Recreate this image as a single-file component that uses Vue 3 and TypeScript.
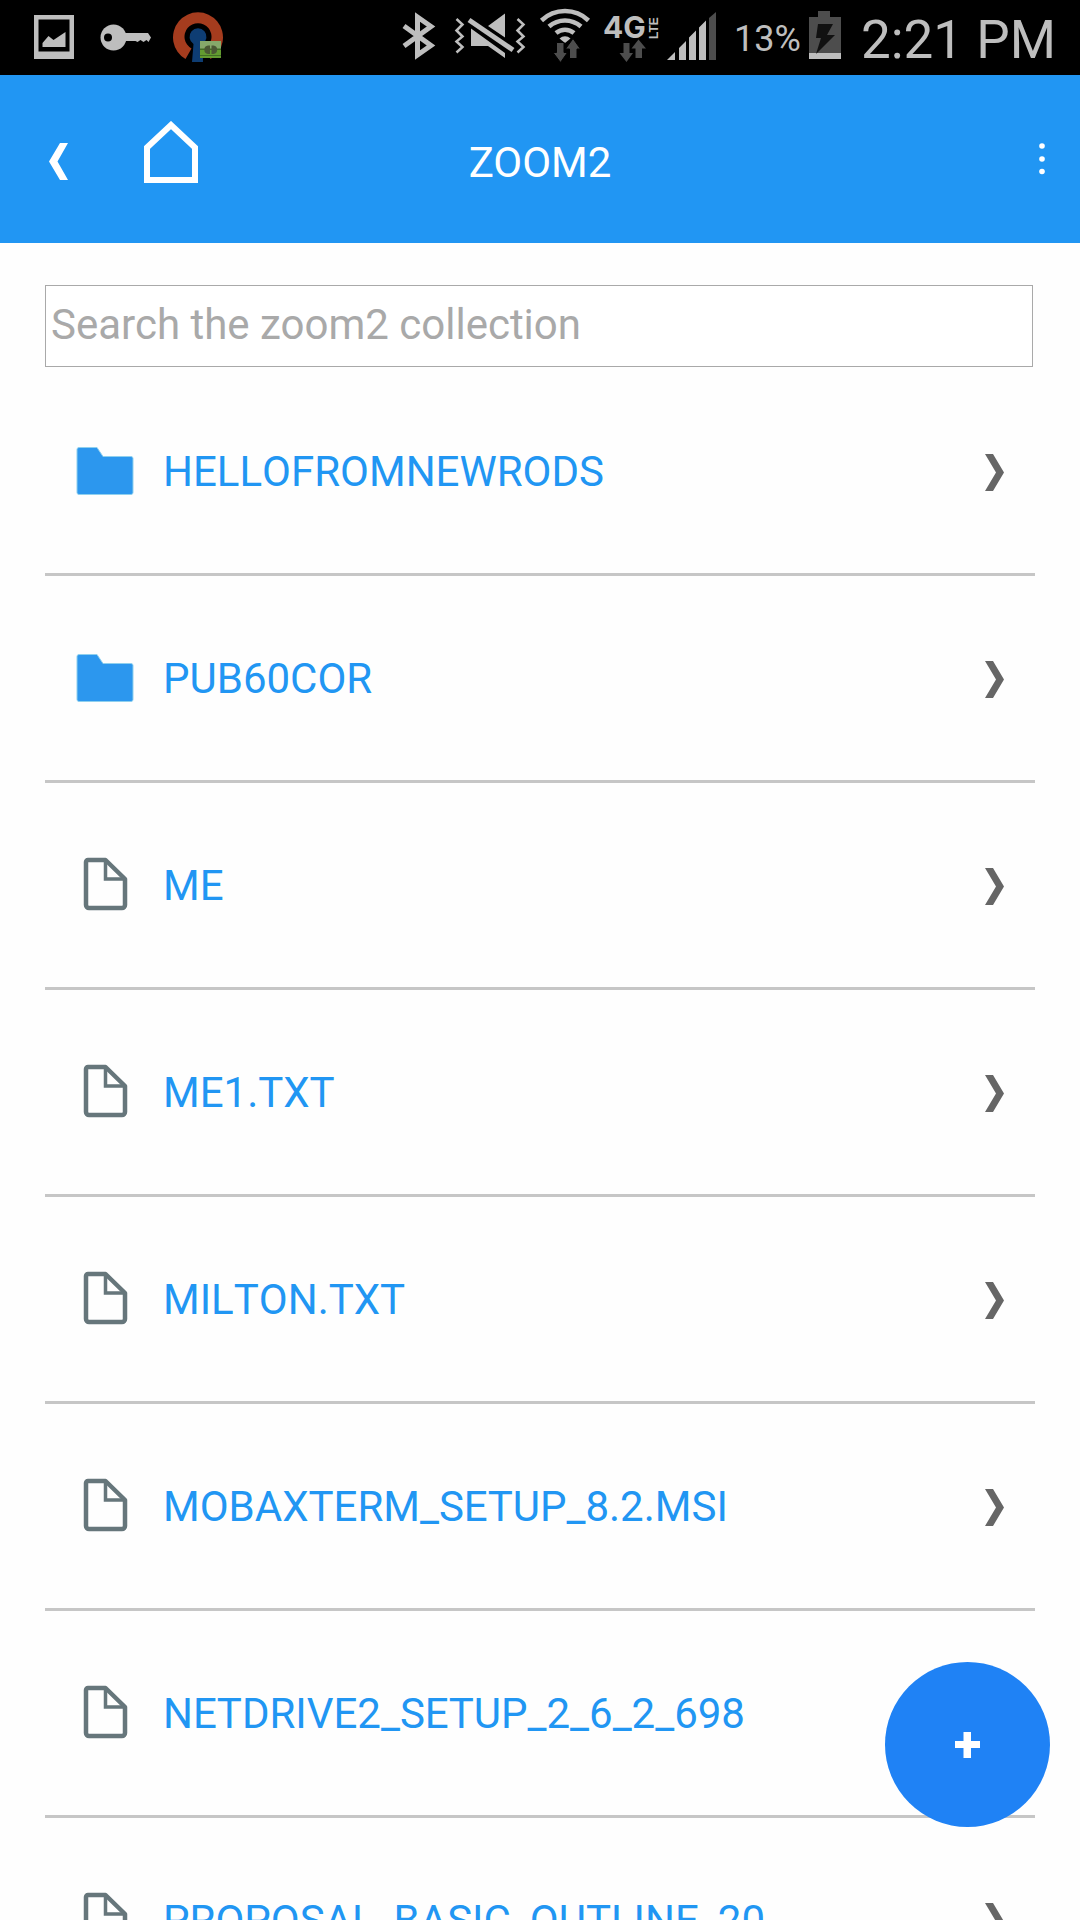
<script setup lang="ts">
import { ref } from 'vue'

interface Entry {
  name: string
  kind: 'folder' | 'file'
}

const query = ref('')

const entries: Entry[] = [
  { name: 'HELLOFROMNEWRODS', kind: 'folder' },
  { name: 'PUB60COR', kind: 'folder' },
  { name: 'ME', kind: 'file' },
  { name: 'ME1.TXT', kind: 'file' },
  { name: 'MILTON.TXT', kind: 'file' },
  { name: 'MOBAXTERM_SETUP_8.2.MSI', kind: 'file' },
  { name: 'NETDRIVE2_SETUP_2_6_2_698', kind: 'file' },
  { name: 'PROPOSAL_BASIC_OUTLINE_20', kind: 'file' },
]
</script>

<template>
  <div class="app">
    <div class="status">
      <div class="notices">
        <svg width="45" height="75" viewBox="33 0 45 75" aria-hidden="true">
          <path fill="#bebebe" fill-rule="evenodd" d="M34 15h40v44H34zM38.500 19.500v32h31v-32z" />
          <path fill="#bebebe" d="M42.500 47v-4l6-7 5 4 12-8v15z" />
        </svg>
        <svg width="54" height="75" viewBox="98 0 54 75" aria-hidden="true">
          <path fill="#bebebe" d="M124.500 33H148l3 4.500-2.500 4.500-2-2-3 2-3-2-3 2-2-1H124.500z" />
          <circle cx="113.500" cy="37.500" r="13" fill="#bebebe" />
          <circle cx="108" cy="37.500" r="4" fill="#000" />
        </svg>
        <svg width="52" height="75" viewBox="172 0 52 75" aria-hidden="true">
          <path fill="#a53c1e" d="M185.500 59A25 25 0 1 1 210.500 59L204.500 48.500A13.500 13.500 0 1 0 191.500 48.500z" />
          <path fill="#0e3d73" d="M193.500 44a8.500 8.500 0 1 1 9 0L203 62H192z" />
          <path fill="#86a96a" d="M200 41h21v8h-21z" />
          <path fill="#639b30" d="M200 49h21v9h-21z" />
          <path fill="#426d25" d="M200 48.500h21v1.500h-21zM200 55h21v1h-21z" />
          <path fill="#4b5934" d="M210 45.500v8.500h-2a4.300 4.300 0 0 1 0-8.500zM211.500 45.500v8.500h2a4.300 4.300 0 0 0 0-8.500z" />
        </svg>
      </div>
      <div class="system">
        <svg width="40" height="75" viewBox="400 0 40 75" aria-hidden="true">
          <path fill="none" stroke="#bebebe" stroke-width="5" d="M404 26l27 19.500-13.500 9.500V17L431 26.500 404 46" />
        </svg>
        <svg width="80" height="75" viewBox="448 0 80 75" aria-hidden="true">
          <path fill="none" stroke="#bebebe" stroke-width="2.500" d="M456.500 19l6 5.500-6 6 6 6-6 5 6 5.500-6 5.500M517.500 19l6 5.500-6 6 6 6-6 5 6 5.500-6 5.500" />
          <path fill="#bebebe" d="M505 13.500v24L488 26zM471 28.500L505 53v5l-17-12h-17z" />
          <path stroke="#bebebe" stroke-width="5" d="M469 20l44 30" />
        </svg>
        <svg width="56" height="75" viewBox="536 0 56 75" aria-hidden="true">
          <g fill="none" stroke="#bebebe" stroke-width="4.500">
            <path d="M541.500 20.500a34 34 0 0 1 47 0" />
            <path d="M549 26.500a24 24 0 0 1 32 0" />
            <path d="M556 33a14 14 0 0 1 18 0" />
          </g>
          <path fill="#bebebe" d="M559.500 38.500a8 8 0 0 1 11 0L565 43z" />
          <path fill="#4d4d4d" stroke="#000" stroke-width="1" d="M556.500 42.500h7.500v10h3.500L560.500 62.500 553 52.500h3.500zM569.500 58.500h7.500v-9.500h3.500L573 38.500 565.500 49h4z" />
        </svg>
        <svg width="62" height="75" viewBox="600 0 62 75" role="img" aria-label="4G LTE">
          <text x="603" y="38" class="net">4G</text>
          <text x="-39" y="658" transform="rotate(-90)" class="lte">LTE</text>
          <path fill="#4d4d4d" d="M623.500 43h6v10h3.500L626.500 62 619.500 53h4zM635.500 58h6.500v-9.500h4L638.500 39.500 631.500 48.500h4z" />
        </svg>
        <svg width="48" height="75" viewBox="666 0 48 75" class="signal" aria-hidden="true">
          <path fill="#bebebe" d="M667 60l8-8v8zM679 60V48l7-7v19zM689 60V37.500l7-7V60zM699 60V27.500l7-7V60z" />
          <path fill="#4d4d4d" d="M709 60V18l7-6v48z" />
        </svg>
        <span class="percent">13%</span>
        <svg width="44" height="75" viewBox="809 0 44 75" aria-hidden="true">
          <path fill="#4d4d4d" d="M809 17h9v-6h12v6h11v36h-32z" />
          <path fill="#bebebe" d="M809 53h32v6h-32z" />
          <path fill="#111" d="M818 24h15l-6 11h8L816 54l5-16h-5z" />
        </svg>
        <time class="clock">2:21 PM</time>
      </div>
    </div>

    <header class="bar">
      <div class="side">
        <button type="button" class="icon back" aria-label="Back">
          <svg width="19" height="37" viewBox="0 0 19 37"><path fill="#fff" d="M11 0h8L8.500 18.500 19 37h-8L0 18.500z" /></svg>
        </button>
        <button type="button" class="icon home" aria-label="Home">
          <svg width="54" height="62" viewBox="0 0 54 62"><path fill="none" stroke="#fff" stroke-width="6" d="M3 26.500L27 4 51 26.500V59H3z" /></svg>
        </button>
      </div>
      <h1>ZOOM2</h1>
      <div class="side end">
        <button type="button" class="icon" aria-label="More options">
          <svg width="8" height="32" viewBox="0 0 8 32" fill="#fff"><circle cx="4" cy="3" r="2.800" /><circle cx="4" cy="16" r="2.800" /><circle cx="4" cy="28.500" r="2.800" /></svg>
        </button>
      </div>
    </header>

    <main>
      <input v-model="query" type="search" class="search" aria-label="Search the zoom2 collection" placeholder="Search the zoom2 collection" />
      <ul>
        <li v-for="entry in entries" :key="entry.name">
          <a href="#">
            <svg v-if="entry.kind === 'folder'" width="60" height="60" viewBox="0 0 60 60" aria-hidden="true">
              <path fill="#2c97ee" stroke="#8fd0ee" stroke-width="1" d="M4 6.500h18l6 9h28a2 2 0 0 1 2 2v34a2 2 0 0 1-2 2H4a2 2 0 0 1-2-2v-43a2 2 0 0 1 2-2z" />
            </svg>
            <svg v-else width="60" height="60" viewBox="0 0 60 60" fill="none" stroke="#66767b" aria-hidden="true">
              <path stroke-width="4.500" stroke-linejoin="round" d="M13 5h17.500L50 24v26a3 3 0 0 1-3 3H14a3 3 0 0 1-3-3V7a2 2 0 0 1 2-2z" />
              <path stroke-width="3.500" d="M30.500 5.500V24H50" />
            </svg>
            <span class="name">{{ entry.name }}</span>
            <svg width="19" height="40" viewBox="0 -3 19 40" aria-hidden="true"><path fill="#666" d="M0 0h8l11 18.500L8 37H0l11-18.500z" /></svg>
          </a>
        </li>
      </ul>
    </main>

    <button type="button" class="fab" aria-label="Add">
      <svg width="26" height="26" viewBox="0 0 26 26"><path fill="#fff" d="M8.500 0h7.500v9h9v7h-9v10H8.500V16H0V9h8.500z" /></svg>
    </button>
  </div>
</template>

<style>
body {
  margin: 0;
  background: #fefefe;
}
</style>

<style scoped>
.app {
  display: flex;
  flex-direction: column;
  height: 100vh;
  overflow: hidden;
  font-family: Roboto, "Liberation Sans", sans-serif;
  font-size: 42px;
}
svg {
  display: block;
  flex: none;
}
.status {
  display: flex;
  flex: none;
  justify-content: space-between;
  padding: 0 24px 0 33px;
  background: #000;
  color: #bebebe;
}
.notices,
.system {
  display: flex;
  align-items: center;
}
.notices {
  gap: 20px;
}
.system {
  gap: 8px;
}
.net {
  fill: #bebebe;
  font: 700 30px Inter, sans-serif;
}
.lte {
  fill: #bebebe;
  font: 700 12px "Liberation Sans", sans-serif;
}
.signal {
  margin-left: -4px;
  overflow: visible;
}
.percent {
  padding: 2px 0 0 12px;
  font-size: 36px;
}
.clock {
  padding-top: 4px;
  font-size: 53px;
  line-height: 60px;
}
.bar {
  display: flex;
  flex: none;
  align-items: center;
  box-sizing: border-box;
  height: 168px;
  padding: 0 34px;
  background: #2196f3;
  color: #fff;
}
.side {
  display: flex;
  flex: 1;
  align-items: center;
  gap: 76px;
}
.end {
  justify-content: flex-end;
}
h1 {
  margin: 0;
  padding-top: 6px;
  font-size: 42px;
  font-weight: 400;
}
.icon {
  padding: 0;
  border: 0;
  background: none;
  cursor: pointer;
}
.back {
  margin-left: 15px;
  padding-top: 4px;
}
.home {
  padding-bottom: 14px;
}
main {
  flex: 1;
  min-height: 0;
  padding: 42px 45px 0;
  overflow-y: auto;
  scrollbar-width: none;
}
.search {
  display: block;
  box-sizing: border-box;
  width: calc(100% - 2px);
  height: 82px;
  margin: 0 0 2px;
  padding: 0 5px 4px;
  border: 1px solid #a9a9a9;
  border-radius: 0;
  outline: 0;
  background: #fff;
  color: #333;
  font: inherit;
  appearance: none;
}
.search::placeholder {
  color: #a9a9a9;
  opacity: 1;
}
ul {
  margin: 0;
  padding: 0;
  list-style: none;
}
li {
  border-bottom: 3px solid #c6c6c6;
}
a {
  display: flex;
  align-items: center;
  height: 204px;
  padding: 0 31px 0 30px;
  color: #2196f3;
  text-decoration: none;
}
.name {
  flex: 1;
  margin-left: 28px;
  font-kerning: none;
}
.fab {
  position: fixed;
  right: 30px;
  bottom: 93px;
  display: flex;
  align-items: center;
  justify-content: center;
  width: 165px;
  height: 165px;
  padding: 0;
  border: 0;
  border-radius: 50%;
  background: #1f82f5;
  cursor: pointer;
}
</style>
